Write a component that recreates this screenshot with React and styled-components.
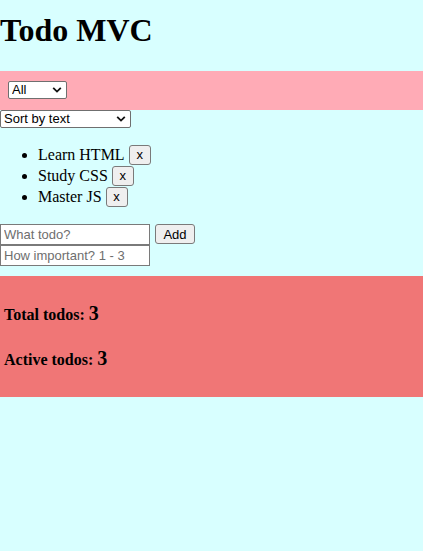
import React from "react";
import styled, { createGlobalStyle } from "styled-components";

const Global = createGlobalStyle`
  html, body {
    margin: 0;
    padding: 0;
    background: #d8ffff;
    min-height: 100%;
  }
  body {
    font-family: "Liberation Serif", "Times New Roman", serif;
    font-size: 16px;
    color: #000;
  }
`;

const Page = styled.div`
  display: flex;
  flex-direction: column;
`;

const Title = styled.h1`
  margin: 12px 0 22px;
  font-size: 32px;
  line-height: 37px;
  font-weight: bold;
`;

const FilterBar = styled.div`
  background: #ffabb6;
  padding: 10px 8px 11px;
  display: flex;
`;

const SelectWrap = styled.div`
  position: relative;
  display: inline-flex;
  width: ${(p) => p.$w}px;
  height: 18px;
`;

const Select = styled.select`
  appearance: none;
  -webkit-appearance: none;
  width: 100%;
  height: 100%;
  box-sizing: border-box;
  margin: 0;
  padding: 0 0 0 3px;
  border: 1px solid #6f6f6f;
  border-radius: 2px;
  background: #fff;
  font-family: "Liberation Sans", Arial, sans-serif;
  font-size: 13px;
  color: #000;
  line-height: 16px;
`;

const Chevron = styled.svg`
  position: absolute;
  right: 5px;
  top: 5px;
  width: 10px;
  height: 8px;
  pointer-events: none;
`;

const SortRow = styled.div`
  display: flex;
`;

const List = styled.ul`
  margin: 16px 0 17px;
  padding-left: 38px;
`;

const Item = styled.li`
  line-height: 21px;
  height: 21px;
  font-size: 16px;
`;

const SmallButton = styled.button`
  box-sizing: border-box;
  height: 20px;
  width: ${(p) => p.$w}px;
  margin: 0 0 0 ${(p) => p.$ml}px;
  padding: 0;
  border: 1px solid #7a7a7a;
  border-radius: 3px;
  background: #efefef;
  font-family: "Liberation Sans", Arial, sans-serif;
  font-size: 13px;
  line-height: 17px;
  color: #000;
  vertical-align: 1px;
`;

const Form = styled.form`
  display: flex;
  flex-direction: column;
  margin: 0 0 10px;
`;

const FormRow = styled.div`
  display: flex;
  align-items: flex-start;
`;

const Input = styled.input`
  box-sizing: border-box;
  width: 150px;
  height: 21px;
  margin: 0;
  padding: 1px 3px;
  border: 1px solid #7a7a7a;
  background: #fff;
  font-family: "Liberation Sans", Arial, sans-serif;
  font-size: 13px;
  color: #000;
  &::placeholder {
    color: #6e6e6e;
  }
`;

const Stats = styled.div`
  background: #f07676;
  padding: 5px 4px 5px;
`;

const StatLine = styled.h4`
  margin: 21px 0;
  font-size: 16px;
  line-height: 23px;
  font-weight: bold;
`;

const Count = styled.span`
  font-size: 20px;
`;

function ChevronIcon() {
  return (
    <Chevron viewBox="0 0 10 8">
      <path d="M1.2 1.8 L5 5.6 L8.8 1.8" fill="none" stroke="#111" strokeWidth="1.8" />
    </Chevron>
  );
}

const todos = ["Learn HTML", "Study CSS", "Master JS"];

export default function App() {
  return (
    <Page>
      <Global />
      <Title>Todo MVC</Title>
      <FilterBar>
        <SelectWrap $w={59}>
          <Select defaultValue="All">
            <option>All</option>
            <option>Active</option>
            <option>Completed</option>
          </Select>
          <ChevronIcon />
        </SelectWrap>
      </FilterBar>
      <SortRow>
        <SelectWrap $w={131}>
          <Select defaultValue="text">
            <option value="text">Sort by text</option>
            <option value="importance">Sort by importance</option>
          </Select>
          <ChevronIcon />
        </SelectWrap>
      </SortRow>
      <List>
        {todos.map((t) => (
          <Item key={t}>
            {t}
            <SmallButton $w={22} $ml={4}>x</SmallButton>
          </Item>
        ))}
      </List>
      <Form onSubmit={(e) => e.preventDefault()}>
        <FormRow>
          <Input placeholder="What todo?" />
          <SmallButton $w={40} $ml={5}>Add</SmallButton>
        </FormRow>
        <FormRow>
          <Input placeholder="How important? 1 - 3" />
        </FormRow>
      </Form>
      <Stats>
        <StatLine>
          Total todos: <Count>3</Count>
        </StatLine>
        <StatLine>
          Active todos: <Count>3</Count>
        </StatLine>
      </Stats>
    </Page>
  );
}
